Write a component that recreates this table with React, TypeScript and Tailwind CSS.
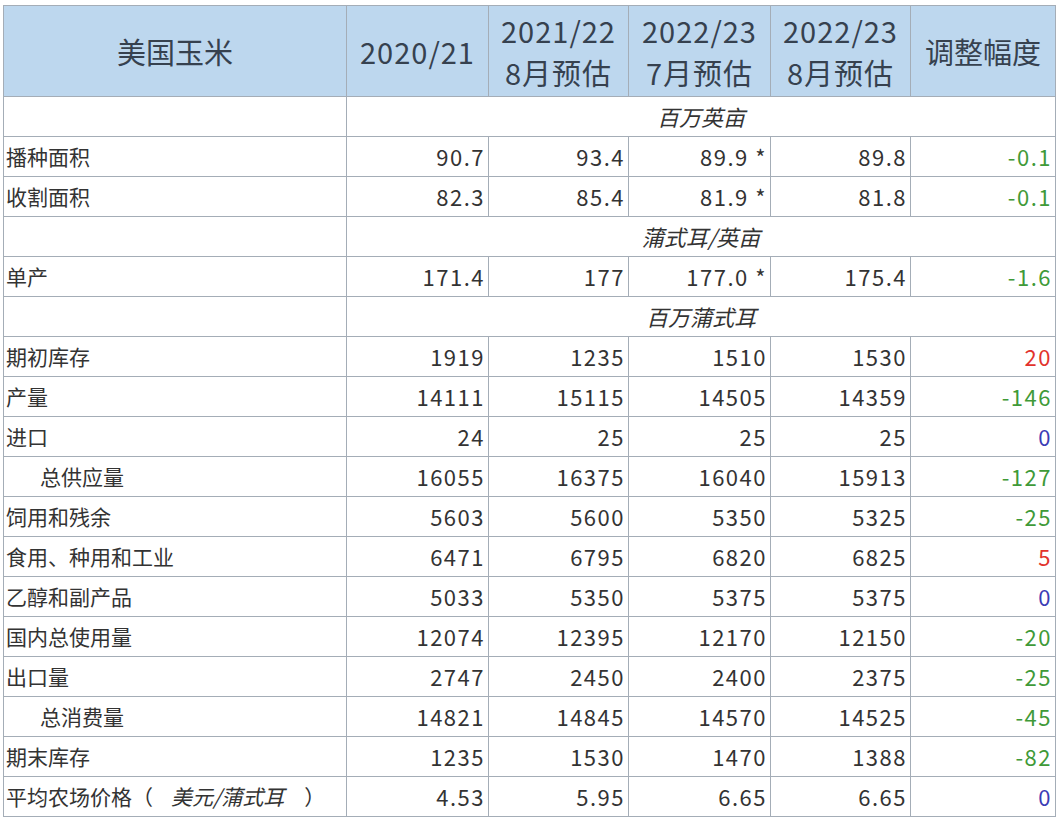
import React from "react";

type Row = {
  label: string;
  indent?: boolean;
  values: string[];
  change: string;
  tone: "green" | "red" | "blue";
};

type UnitRow = { unit: string };

const rows: (Row | UnitRow)[] = [
  { unit: "百万英亩" },
  { label: "播种面积", values: ["90.7", "93.4", "89.9 *", "89.8"], change: "-0.1", tone: "green" },
  { label: "收割面积", values: ["82.3", "85.4", "81.9 *", "81.8"], change: "-0.1", tone: "green" },
  { unit: "蒲式耳/英亩" },
  { label: "单产", values: ["171.4", "177", "177.0 *", "175.4"], change: "-1.6", tone: "green" },
  { unit: "百万蒲式耳" },
  { label: "期初库存", values: ["1919", "1235", "1510", "1530"], change: "20", tone: "red" },
  { label: "产量", values: ["14111", "15115", "14505", "14359"], change: "-146", tone: "green" },
  { label: "进口", values: ["24", "25", "25", "25"], change: "0", tone: "blue" },
  { label: "总供应量", indent: true, values: ["16055", "16375", "16040", "15913"], change: "-127", tone: "green" },
  { label: "饲用和残余", values: ["5603", "5600", "5350", "5325"], change: "-25", tone: "green" },
  { label: "食用、种用和工业", values: ["6471", "6795", "6820", "6825"], change: "5", tone: "red" },
  { label: "乙醇和副产品", values: ["5033", "5350", "5375", "5375"], change: "0", tone: "blue" },
  { label: "国内总使用量", values: ["12074", "12395", "12170", "12150"], change: "-20", tone: "green" },
  { label: "出口量", values: ["2747", "2450", "2400", "2375"], change: "-25", tone: "green" },
  { label: "总消费量", indent: true, values: ["14821", "14845", "14570", "14525"], change: "-45", tone: "green" },
  { label: "期末库存", values: ["1235", "1530", "1470", "1388"], change: "-82", tone: "green" },
  { label: "PRICE", values: ["4.53", "5.95", "6.65", "6.65"], change: "0", tone: "blue" },
];

const toneClass = {
  green: "text-[#3f9a38]",
  red: "text-[#e2332c]",
  blue: "text-[#3b3bb5]",
};

const cell = "border border-[#a4adb7]";
const num = `${cell} pl-[4px] pr-[3px] text-right whitespace-pre text-[22px] tracking-[1.5px]`;

export default function App() {
  return (
    <div className="min-h-screen bg-white pt-[5px] pl-[3px] font-['Noto_Sans_CJK_SC','Noto_Sans',sans-serif] text-[#333]">
      <table className="w-[1052px] table-fixed border-collapse">
        <colgroup>
          <col className="w-[343px]" />
          <col className="w-[142px]" />
          <col className="w-[140px]" />
          <col className="w-[142px]" />
          <col className="w-[140px]" />
          <col className="w-[145px]" />
        </colgroup>
        <thead>
          <tr className="h-[91px] bg-[#bdd7ee] text-[29px] leading-[42px] text-[#36414f]">
            <th className={`${cell} font-normal`}>美国玉米</th>
            <th className={`${cell} font-normal tracking-[1px]`}>2020/21</th>
            <th className={`${cell} font-normal tracking-[1px]`}>
              2021/22
              <br />
              8月预估
            </th>
            <th className={`${cell} font-normal tracking-[1px]`}>
              2022/23
              <br />
              7月预估
            </th>
            <th className={`${cell} font-normal tracking-[1px]`}>
              2022/23
              <br />
              8月预估
            </th>
            <th className={`${cell} font-normal`}>调整幅度</th>
          </tr>
        </thead>
        <tbody className="text-[21px]">
          {rows.map((row, i) =>
            "unit" in row ? (
              <tr key={i} className="h-[40px]">
                <td className={cell}></td>
                <td colSpan={5} className={`${cell} text-center text-[22px] italic`}>
                  {row.unit}
                </td>
              </tr>
            ) : (
              <tr key={i} className="h-[40px]">
                <td className={`${cell} whitespace-nowrap ${row.indent ? "pl-[36px]" : "pl-[2px]"}`}>
                  {row.label === "PRICE" ? (
                    <>
                      平均农场价格（<span className="ml-[18px] mr-[20px] italic">美元/蒲式耳</span>）
                    </>
                  ) : (
                    row.label
                  )}
                </td>
                {row.values.map((v, j) => (
                  <td key={j} className={num}>
                    {v}
                  </td>
                ))}
                <td className={`${num} ${toneClass[row.tone]}`}>{row.change}</td>
              </tr>
            )
          )}
        </tbody>
      </table>
    </div>
  );
}
